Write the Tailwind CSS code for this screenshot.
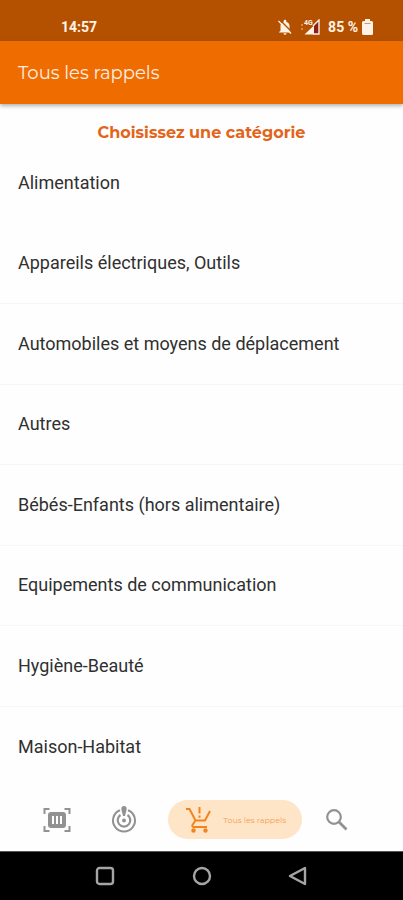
<!DOCTYPE html>
<html lang="fr">
<head>
<meta charset="utf-8">
<meta name="viewport" content="width=device-width, initial-scale=1">
<title>Tous les rappels</title>
<script src="https://cdn.jsdelivr.net/npm/@tailwindcss/browser@4"></script>
</head>
<body class="flex min-h-screen flex-col bg-[#fefefe] font-[Roboto,sans-serif] text-[#303030]">
  <div class="flex h-[41px] shrink-0 items-center justify-between bg-[#b45100] pt-3 pr-[30px] pl-[61px] text-sm font-bold text-[#fff3e8]">
    <time>14:57</time>
    <div class="flex items-center">
      <svg class="mr-2 h-4 w-4" viewBox="0 0 16 16" aria-hidden="true">
        <path fill="currentColor" d="M3.500 12V7c0-2 1-3.500 3.200-4V2a1.300 1.300 0 0 1 2.600 0v1c2.200.5 3.200 2 3.200 4v5l1.500 1v.5H2V13zM6.500 14.200h3a1.500 1.500 0 0 1-3 0z"/>
        <path stroke="#b45100" stroke-width="1.400" d="M3.200 1.300 15.200 13.300"/>
        <path stroke="currentColor" stroke-width="1.300" d="M1.500 2 14 14.500"/>
      </svg>
      <svg class="mr-2 h-4 w-[19px]" viewBox="0 0 19 16" aria-hidden="true">
        <path fill="#d98a48" d="M0 5h2v2H0zM0 9h2v2H0z"/>
        <path fill="#8c2015" d="M12 7l6.500-6.500v15H12z"/>
        <path fill="currentColor" d="M3.500 15.500 13 6.500v9z"/>
        <path fill="none" stroke="currentColor" stroke-width="1.400" d="M12 7l6-6v14h-6"/>
        <text x="3" y="6" font-size="7" font-weight="700" fill="currentColor">4G</text>
      </svg>
      <span class="mr-1">85 %</span>
      <svg class="h-4 w-[11px]" viewBox="0 0 11 16" aria-hidden="true">
        <path fill="currentColor" d="M3 0h5v2h1.500Q11 2 11 3.500v11q0 1.500-1.500 1.500h-8Q0 16 0 14.500v-11Q0 2 1.500 2H3z"/>
        <path stroke="#d1966b" d="M2.500 4.500h6"/>
      </svg>
    </div>
  </div>
  <header class="z-10 flex h-[63px] shrink-0 items-center bg-[#ef6c00] px-[18px] shadow-[0_2px_4px_rgba(0,0,0,0.3)]">
    <h1 class="font-[Montserrat,Inter,sans-serif] text-lg text-[#ffeee0]">Tous les rappels</h1>
  </header>
  <main class="flex flex-1 flex-col">
    <h2 class="pt-[19px] text-center font-[Montserrat,Inter,sans-serif] text-base leading-5 font-bold text-[#e2651a]">Choisissez une catégorie</h2>
    <ul class="grid flex-1 auto-rows-fr text-lg">
      <li class="flex"><a href="#alimentation" class="flex flex-1 items-center px-[18px]">Alimentation</a></li>
      <li class="flex border-b border-[#f6f6f6]"><a href="#appareils" class="flex flex-1 items-center px-[18px]">Appareils électriques, Outils</a></li>
      <li class="flex border-b border-[#f6f6f6]"><a href="#automobiles" class="flex flex-1 items-center px-[18px]">Automobiles et moyens de déplacement</a></li>
      <li class="flex border-b border-[#f6f6f6]"><a href="#autres" class="flex flex-1 items-center px-[18px]">Autres</a></li>
      <li class="flex border-b border-[#f6f6f6]"><a href="#enfants" class="flex flex-1 items-center px-[18px]">Bébés-Enfants (hors alimentaire)</a></li>
      <li class="flex border-b border-[#f6f6f6]"><a href="#communication" class="flex flex-1 items-center px-[18px]">Equipements de communication</a></li>
      <li class="flex border-b border-[#f6f6f6]"><a href="#hygiene" class="flex flex-1 items-center px-[18px]">Hygiène-Beauté</a></li>
      <li class="flex"><a href="#maison" class="flex flex-1 items-center px-[18px]">Maison-Habitat</a></li>
    </ul>
  </main>
  <nav class="flex h-16 shrink-0 items-center justify-between pt-px pr-[54px] pl-[43px] text-[#929292]" aria-label="Navigation principale">
    <button type="button" aria-label="Scanner">
      <svg class="h-7 w-7" viewBox="0 0 28 28" fill="none" stroke="currentColor" stroke-width="2">
        <path d="M1.500 8V3h5M21.500 3h5v5M26.500 20v5h-5M6.500 25h-5v-5"/>
        <rect x="5" y="6" width="18" height="16" rx="3" fill="currentColor" stroke="none"/>
        <path stroke="#fefefe" d="M10 10v8M14 10v8M18 10v8"/>
      </svg>
    </button>
    <button type="button" aria-label="Alertes" class="ml-4">
      <svg class="h-7 w-7" viewBox="0 0 28 28" fill="none" stroke="currentColor" stroke-width="2">
        <path d="M10 4.300A11 11 0 1 0 18 4.300"/>
        <path d="M10.500 9A6.300 6.300 0 1 0 17.500 9" stroke-width="2.200"/>
        <path d="M14 0c2 0 3 1.500 2.600 3.500L15 10h-2l-1.600-6.500C11 1.500 12 0 14 0z" fill="currentColor" stroke="none"/>
        <circle cx="14" cy="14.500" r="2" fill="currentColor" stroke="none"/>
      </svg>
    </button>
    <button type="button" aria-current="page" class="ml-2 flex h-[39px] w-[134px] items-center rounded-full bg-[#ffe5c8] pl-[18px] text-[#f1841e]">
      <svg class="h-[26px] w-[25px]" viewBox="0 0 25 26" fill="none" stroke="currentColor" stroke-width="2" aria-hidden="true">
        <path d="M0 2h3.500l6 11.500H19L24 4M9.500 13.500 6.500 18q-.8 2 1.500 2h13"/>
        <path d="M13.500 0v6.500M13.500 8.500v2.200"/>
        <circle cx="7.500" cy="23.500" r="2.200" fill="currentColor" stroke="none"/>
        <circle cx="19.500" cy="23.500" r="2.200" fill="currentColor" stroke="none"/>
      </svg>
      <span class="ml-3 font-[Montserrat,Inter,sans-serif] text-[8px] text-[#f3a04f]">Tous les rappels</span>
    </button>
    <button type="button" aria-label="Rechercher">
      <svg class="h-6 w-6" viewBox="0 0 24 24" fill="none" stroke="currentColor" stroke-width="2.200">
        <circle cx="9" cy="9" r="6.800"/>
        <path d="M14 14l7.500 7.500" stroke-width="2.800"/>
      </svg>
    </button>
  </nav>
  <div class="flex h-[49px] shrink-0 items-center justify-between border-t border-[#555] bg-black px-[95px] text-[#a5a5a5]">
    <button type="button" aria-label="Applications récentes">
      <svg class="h-5 w-5" viewBox="0 0 20 20" fill="none" stroke="currentColor" stroke-width="2.400"><rect x="2" y="2" width="16" height="16" rx="2.500"/></svg>
    </button>
    <button type="button" aria-label="Accueil">
      <svg class="h-5 w-5" viewBox="0 0 20 20" fill="none" stroke="currentColor" stroke-width="2.400"><circle cx="10" cy="10" r="8"/></svg>
    </button>
    <button type="button" aria-label="Retour">
      <svg class="h-5 w-5" viewBox="0 0 20 20" fill="none" stroke="currentColor" stroke-width="2.400" stroke-linejoin="round"><path d="M17 2v16L2 10z"/></svg>
    </button>
  </div>
</body>
</html>
